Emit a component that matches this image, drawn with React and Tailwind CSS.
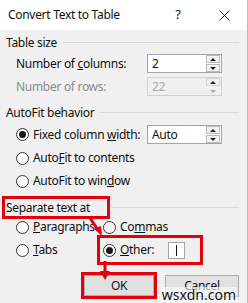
import React from "react";

function Radio({ checked = false }) {
  return (
    <span className="w-[13px] h-[13px] rounded-full border border-[#333] bg-white flex items-center justify-center shrink-0">
      {checked && <span className="w-[7px] h-[7px] rounded-full bg-[#1a1a1a]" />}
    </span>
  );
}

function Spin({ value, disabled = false }) {
  return (
    <div
      className={
        disabled
          ? "w-[75px] h-[19px] border border-[#cfcfcf] bg-[#f0f0f0] flex items-center justify-between pl-[4px] pr-[1px]"
          : "w-[75px] h-[19px] border border-[#a5a5a5] bg-white flex items-center justify-between pl-[4px] pr-[1px]"
      }
    >
      <span className={disabled ? "text-[#a8a8a8]" : "text-[#111]"}>{value}</span>
      <div className="flex flex-col gap-[1px]">
        <div className={disabled ? "w-[14px] h-[8px] border border-[#d6d6d6] bg-[#f0f0f0] flex items-center justify-center" : "w-[14px] h-[8px] border border-[#b9b9b9] bg-[#f3f3f3] flex items-center justify-center"}>
          <svg width="6" height="3" viewBox="0 0 6 3"><path d="M0 3 L3 0 L6 3 Z" fill="#222" /></svg>
        </div>
        <div className={disabled ? "w-[14px] h-[8px] bg-[#f0f0f0] flex items-center justify-center" : "w-[14px] h-[8px] border border-[#b9b9b9] bg-[#f3f3f3] flex items-center justify-center"}>
          <svg width="6" height="3" viewBox="0 0 6 3"><path d="M0 0 L3 3 L6 0 Z" fill={disabled ? "#aaa" : "#222"} /></svg>
        </div>
      </div>
    </div>
  );
}

function Header({ children, boxed = false }) {
  return (
    <div className="flex items-center pl-[6px] pr-[8px] h-[20px]">
      <span className={boxed ? "outline-[3px] outline-solid outline-[#e5000c] outline-offset-[1px] pr-[16px] leading-[15px]" : "leading-[15px]"}>
        {children}
      </span>
      <div className={boxed ? "flex-1 h-px bg-[#dadada] ml-[6px]" : "flex-1 h-px bg-[#dadada] ml-[6px]"} />
    </div>
  );
}

export default function App() {
  return (
    <div
      className="relative w-[248px] h-[303px] overflow-hidden bg-[#f0f0f0] text-[12px] tracking-[-0.3px] text-[#111] border-r border-[#bdbdbd]"
      style={{ fontFamily: '"Noto Sans", "Open Sans", sans-serif' }}
    >
      {/* title bar */}
      <div className="h-[30px] bg-white flex items-center pl-[8px]">
        <span className="flex-1 text-[12px]">Convert Text to Table</span>
        <span className="w-[46px] text-center text-[13px]">?</span>
        <span className="w-[46px] flex justify-center">
          <svg width="11" height="11" viewBox="0 0 11 11"><path d="M0.5 0.5 L10.5 10.5 M10.5 0.5 L0.5 10.5" stroke="#222" strokeWidth="1" /></svg>
        </span>
      </div>

      <div className="mt-[2px]">
        <Header>Table size</Header>
      </div>

      <div className="mt-[2px] flex items-center justify-between pl-[16px] pr-[25px] h-[19px]">
        <span>Number of <u>c</u>olumns:</span>
        <Spin value="2" />
      </div>
      <div className="mt-[4px] flex items-center justify-between pl-[16px] pr-[25px] h-[19px]">
        <span className="text-[#8a8a8a]">Number of rows:</span>
        <Spin value="22" disabled />
      </div>

      <div className="mt-[4px] h-[25px] flex items-center">
        <div className="flex-1"><Header>AutoFit behavior</Header></div>
      </div>

      <div className="flex items-center justify-between pl-[16px] pr-[25px] h-[19px]">
        <span className="flex items-center gap-[4px]"><Radio checked /><span>Fixed column <u>w</u>idth:</span></span>
        <Spin value="Auto" />
      </div>
      <div className="mt-[4px] h-[20px] flex items-center gap-[4px] pl-[16px]">
        <Radio /><span>Auto<u>F</u>it to contents</span>
      </div>
      <div className="mt-[3px] h-[20px] flex items-center gap-[4px] pl-[16px]">
        <Radio /><span>AutoFit to win<u>d</u>ow</span>
      </div>

      <div className="mt-[6px]">
        <Header boxed>Separate text at</Header>
      </div>

      <div className="h-[20px] flex items-center pl-[16px]">
        <span className="w-[87px] flex items-center gap-[4px]"><Radio /><span><u>P</u>aragraphs</span></span>
        <span className="flex items-center gap-[4px]"><Radio /><span>Co<u>m</u>mas</span></span>
      </div>
      <div className="mt-[2px] h-[22px] flex items-center pl-[16px]">
        <span className="w-[87px] flex items-center gap-[4px]"><Radio /><span><u>T</u>abs</span></span>
        <span className="flex items-center gap-[4px] outline-[3px] outline-solid outline-[#e5000c] outline-offset-[3px] pr-[12px]">
          <Radio checked /><span><u>O</u>ther:</span>
          <span className="ml-[10px] w-[17px] h-[17px] bg-white border border-[#a5a5a5] flex items-center justify-center">
            <span className="w-px h-[11px] bg-[#111]" />
          </span>
        </span>
      </div>

      <div className="mt-[14px] flex justify-end gap-[11px] pr-[8px]">
        <button className="w-[70px] h-[21px] bg-[#e1e1e1] border border-[#adadad] outline-[3px] outline-solid outline-[#e5000c] outline-offset-[0px]">OK</button>
        <button className="w-[74px] h-[22px] bg-[#e1e1e1] border border-[#adadad]">Cancel</button>
      </div>

      {/* annotation arrows */}
      <svg className="absolute left-0 top-0 pointer-events-none" width="248" height="303" viewBox="0 0 248 303">
        <path d="M90 218 L98 230" stroke="#e5000c" strokeWidth="3" />
        <path d="M94 229 L102 236 L101 226 Z" fill="#e5000c" />
        <path d="M105 261 L105 272" stroke="#e5000c" strokeWidth="3" />
        <path d="M100 271 L110 271 L105 280 Z" fill="#e5000c" />
      </svg>

      {/* watermark */}
      <div className="absolute right-[10px] bottom-[1px] text-[14px] leading-[15px] tracking-normal text-[#111] bg-white/60 px-[1px]">wsxdn.com</div>
    </div>
  );
}
